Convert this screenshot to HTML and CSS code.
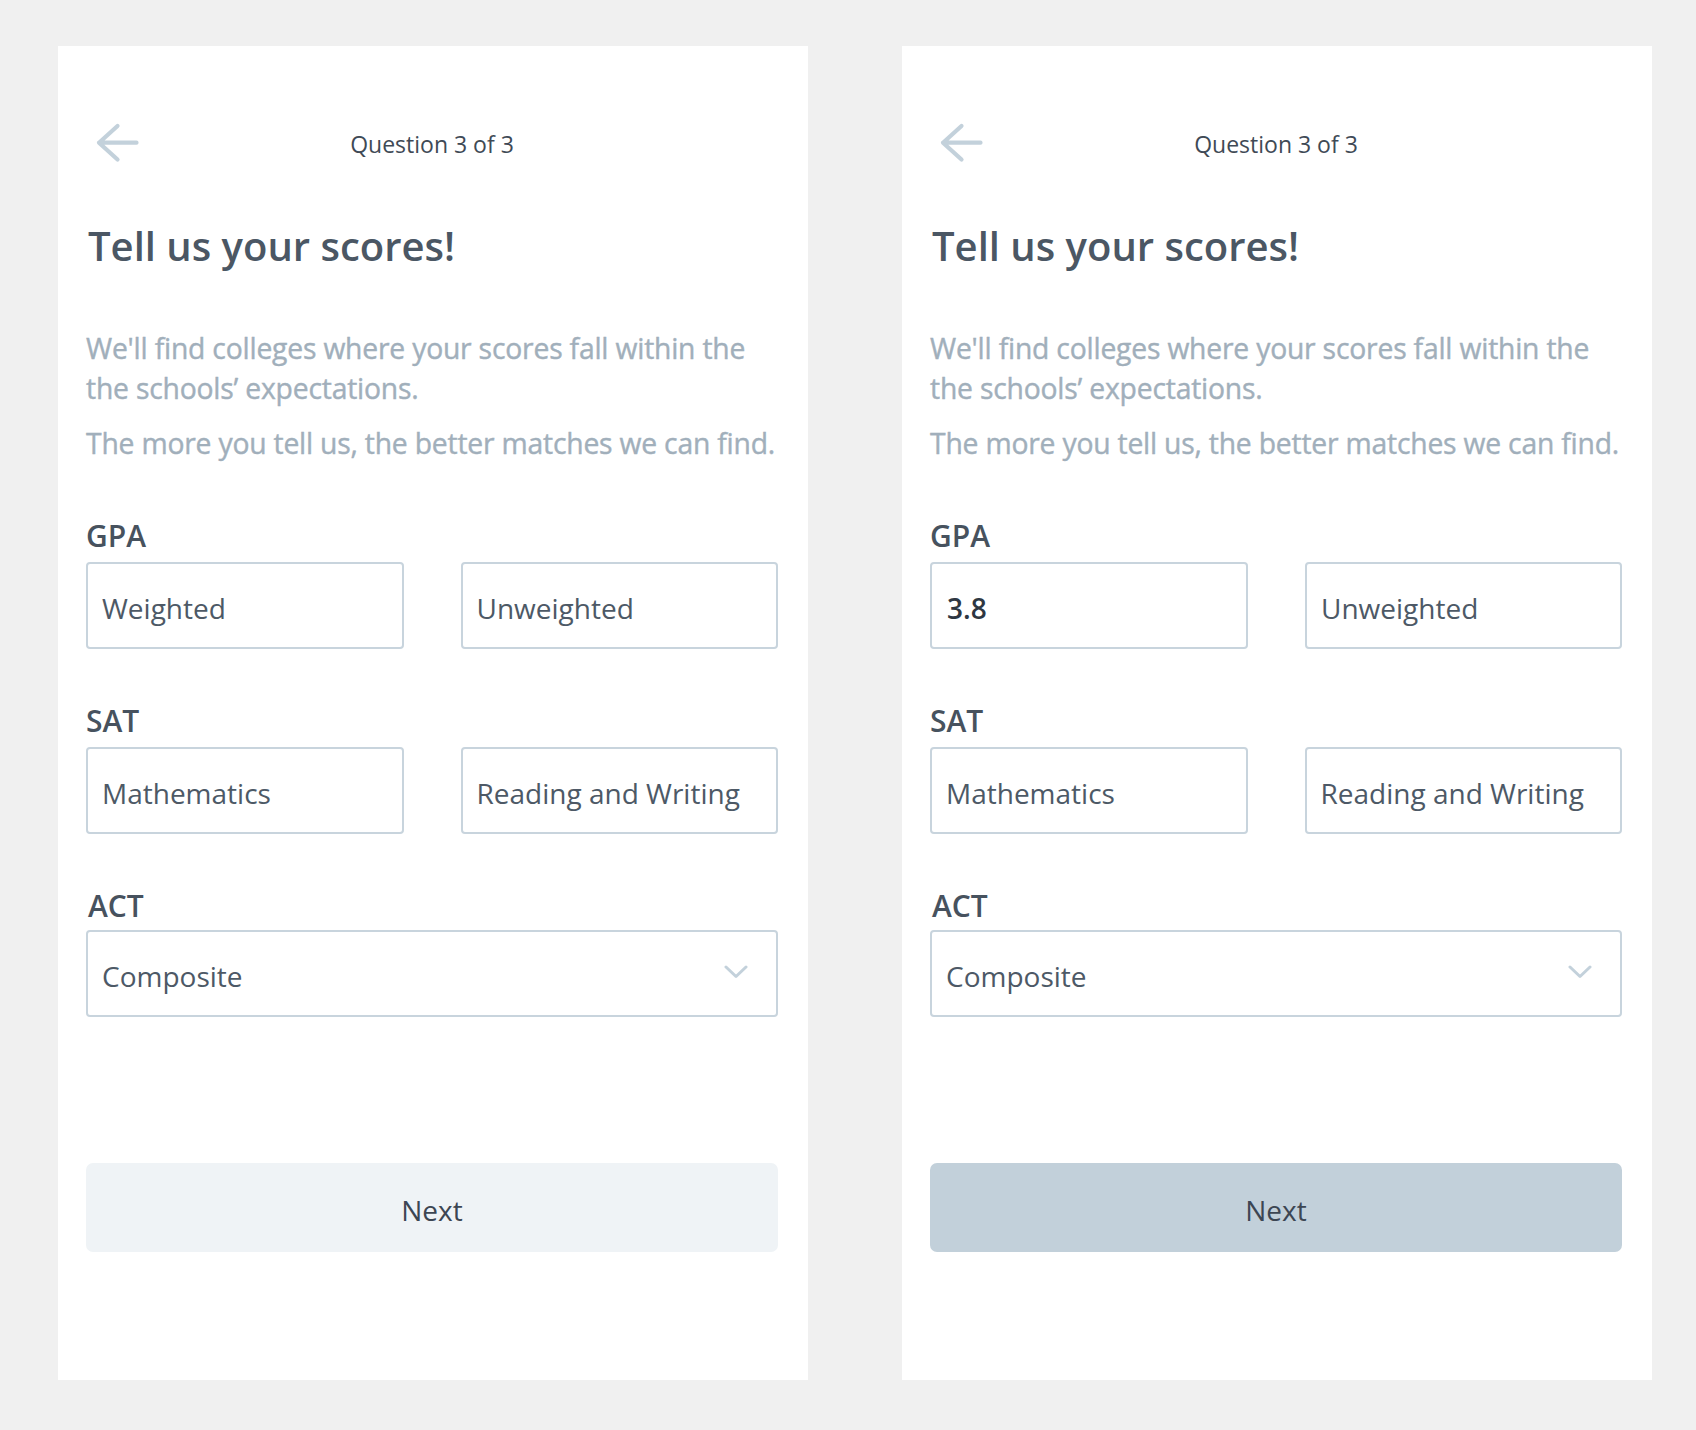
FILE: index.html
```html
<!DOCTYPE html>
<html lang="en">
<head>
<meta charset="utf-8">
<title>Tell us your scores</title>
<link rel="stylesheet" href="styles.css">
</head>
<body>
<main class="screens">
  <section class="card">
    <header class="topbar">
      <svg class="back" width="54" height="40" viewBox="0 0 54 40" aria-hidden="true">
        <path d="M50.5 19.7 H13 M31.5 3 L13 19.7 L31.5 36.5" fill="none" stroke="#c3d1db" stroke-width="4.2" stroke-linecap="round" stroke-linejoin="round"/>
      </svg>
      <div class="step">Question 3 of 3</div>
      <div class="spacer"></div>
    </header>
    <h1 class="title">Tell us your scores!</h1>
    <p class="desc">We'll find colleges where your scores fall within the the schools’ expectations.</p>
    <p class="desc second">The more you tell us, the better matches we can find.</p>
    <div class="group">
      <div class="label">GPA</div>
      <div class="row">
        <input class="field" type="text" placeholder="Weighted">
        <input class="field" type="text" placeholder="Unweighted">
      </div>
    </div>
    <div class="group">
      <div class="label">SAT</div>
      <div class="row">
        <input class="field" type="text" placeholder="Mathematics">
        <input class="field" type="text" placeholder="Reading and Writing">
      </div>
    </div>
    <div class="group">
      <div class="label act">ACT</div>
      <div class="select">
        <span>Composite</span>
        <svg class="chev" width="24" height="14" viewBox="0 0 24 14" aria-hidden="true">
          <path d="M2 2 L12 11.5 L22 2" fill="none" stroke="#c3d1db" stroke-width="3" stroke-linecap="round" stroke-linejoin="round"/>
        </svg>
      </div>
    </div>
    <button class="next" type="button">Next</button>
  </section>

  <section class="card">
    <header class="topbar">
      <svg class="back" width="54" height="40" viewBox="0 0 54 40" aria-hidden="true">
        <path d="M50.5 19.7 H13 M31.5 3 L13 19.7 L31.5 36.5" fill="none" stroke="#c3d1db" stroke-width="4.2" stroke-linecap="round" stroke-linejoin="round"/>
      </svg>
      <div class="step">Question 3 of 3</div>
      <div class="spacer"></div>
    </header>
    <h1 class="title">Tell us your scores!</h1>
    <p class="desc">We'll find colleges where your scores fall within the the schools’ expectations.</p>
    <p class="desc second">The more you tell us, the better matches we can find.</p>
    <div class="group">
      <div class="label">GPA</div>
      <div class="row">
        <input class="field filled" type="text" value="3.8">
        <input class="field" type="text" placeholder="Unweighted">
      </div>
    </div>
    <div class="group">
      <div class="label">SAT</div>
      <div class="row">
        <input class="field" type="text" placeholder="Mathematics">
        <input class="field" type="text" placeholder="Reading and Writing">
      </div>
    </div>
    <div class="group">
      <div class="label act">ACT</div>
      <div class="select">
        <span>Composite</span>
        <svg class="chev" width="24" height="14" viewBox="0 0 24 14" aria-hidden="true">
          <path d="M2 2 L12 11.5 L22 2" fill="none" stroke="#c3d1db" stroke-width="3" stroke-linecap="round" stroke-linejoin="round"/>
        </svg>
      </div>
    </div>
    <button class="next active" type="button">Next</button>
  </section>
</main>
</body>
</html>
```
FILE: styles.css
```css
html, body {
  margin: 0;
  padding: 0;
}
body {
  background: #f0f0f0;
  font-family: "Open Sans", "Noto Sans", sans-serif;
  width: 1696px;
  height: 1430px;
  overflow: hidden;
}
.screens {
  display: flex;
  gap: 94px;
  padding: 46px 0 0 58px;
}
.card {
  box-sizing: border-box;
  width: 750px;
  height: 1334px;
  background: #ffffff;
  padding: 76px 30px 0 28px;
  display: flex;
  flex-direction: column;
}
.topbar {
  display: grid;
  grid-template-columns: 1fr auto 1fr;
  align-items: center;
  height: 40px;
}
.back {
  display: block;
}
.step {
  font-size: 23px;
  color: #3f4a56;
  line-height: 40px;
  padding-top: 2px;
}
.title {
  margin: 60px 0 0 2px;
  font-size: 40px;
  line-height: 48px;
  font-weight: 600;
  color: #4b5764;
  letter-spacing: 0;
}
.desc {
  margin: 58px 0 0 0;
  font-size: 28.3px;
  line-height: 40px;
  color: #a1afbb;
  letter-spacing: -0.2px;
  -webkit-text-stroke: 0.4px #a1afbb;
}
.desc.second {
  margin-top: 15px;
}
.group {
  margin-top: 57px;
}
.group + .group {
  margin-top: 56px;
}
.label {
  font-size: 30px;
  line-height: 32px;
  font-weight: 600;
  color: #47525e;
  margin-bottom: 10px;
}
.label.act {
  padding-left: 2px;
  margin-bottom: 8px;
}
.row {
  display: flex;
  gap: 57px;
}
.field {
  box-sizing: border-box;
  flex: 1 1 0;
  min-width: 0;
  height: 87px;
  border: 2px solid #c8d4dd;
  border-radius: 4px;
  padding: 5px 14px 0 14px;
  font-family: "Open Sans", "Noto Sans", sans-serif;
  font-size: 28px;
  color: #2e3742;
  background: #ffffff;
  outline: none;
}
.field::placeholder {
  color: #4d5966;
  opacity: 1;
}
.field.filled {
  font-weight: 600;
  padding-left: 15px;
}
.select {
  box-sizing: border-box;
  height: 87px;
  border: 2px solid #c8d4dd;
  border-radius: 4px;
  padding: 5px 28px 0 14px;
  display: flex;
  align-items: center;
  justify-content: space-between;
  font-size: 28px;
  color: #4d5966;
}
.chev {
  display: block;
  margin-top: -8px;
}
.next {
  margin-top: 146px;
  height: 89px;
  border: none;
  border-radius: 7px;
  background: #eff3f6;
  font-family: "Open Sans", "Noto Sans", sans-serif;
  font-size: 28px;
  color: #3c4653;
  padding: 4px 0 0 0;
  width: 100%;
}
.next.active {
  background: #c2d0da;
}
```
